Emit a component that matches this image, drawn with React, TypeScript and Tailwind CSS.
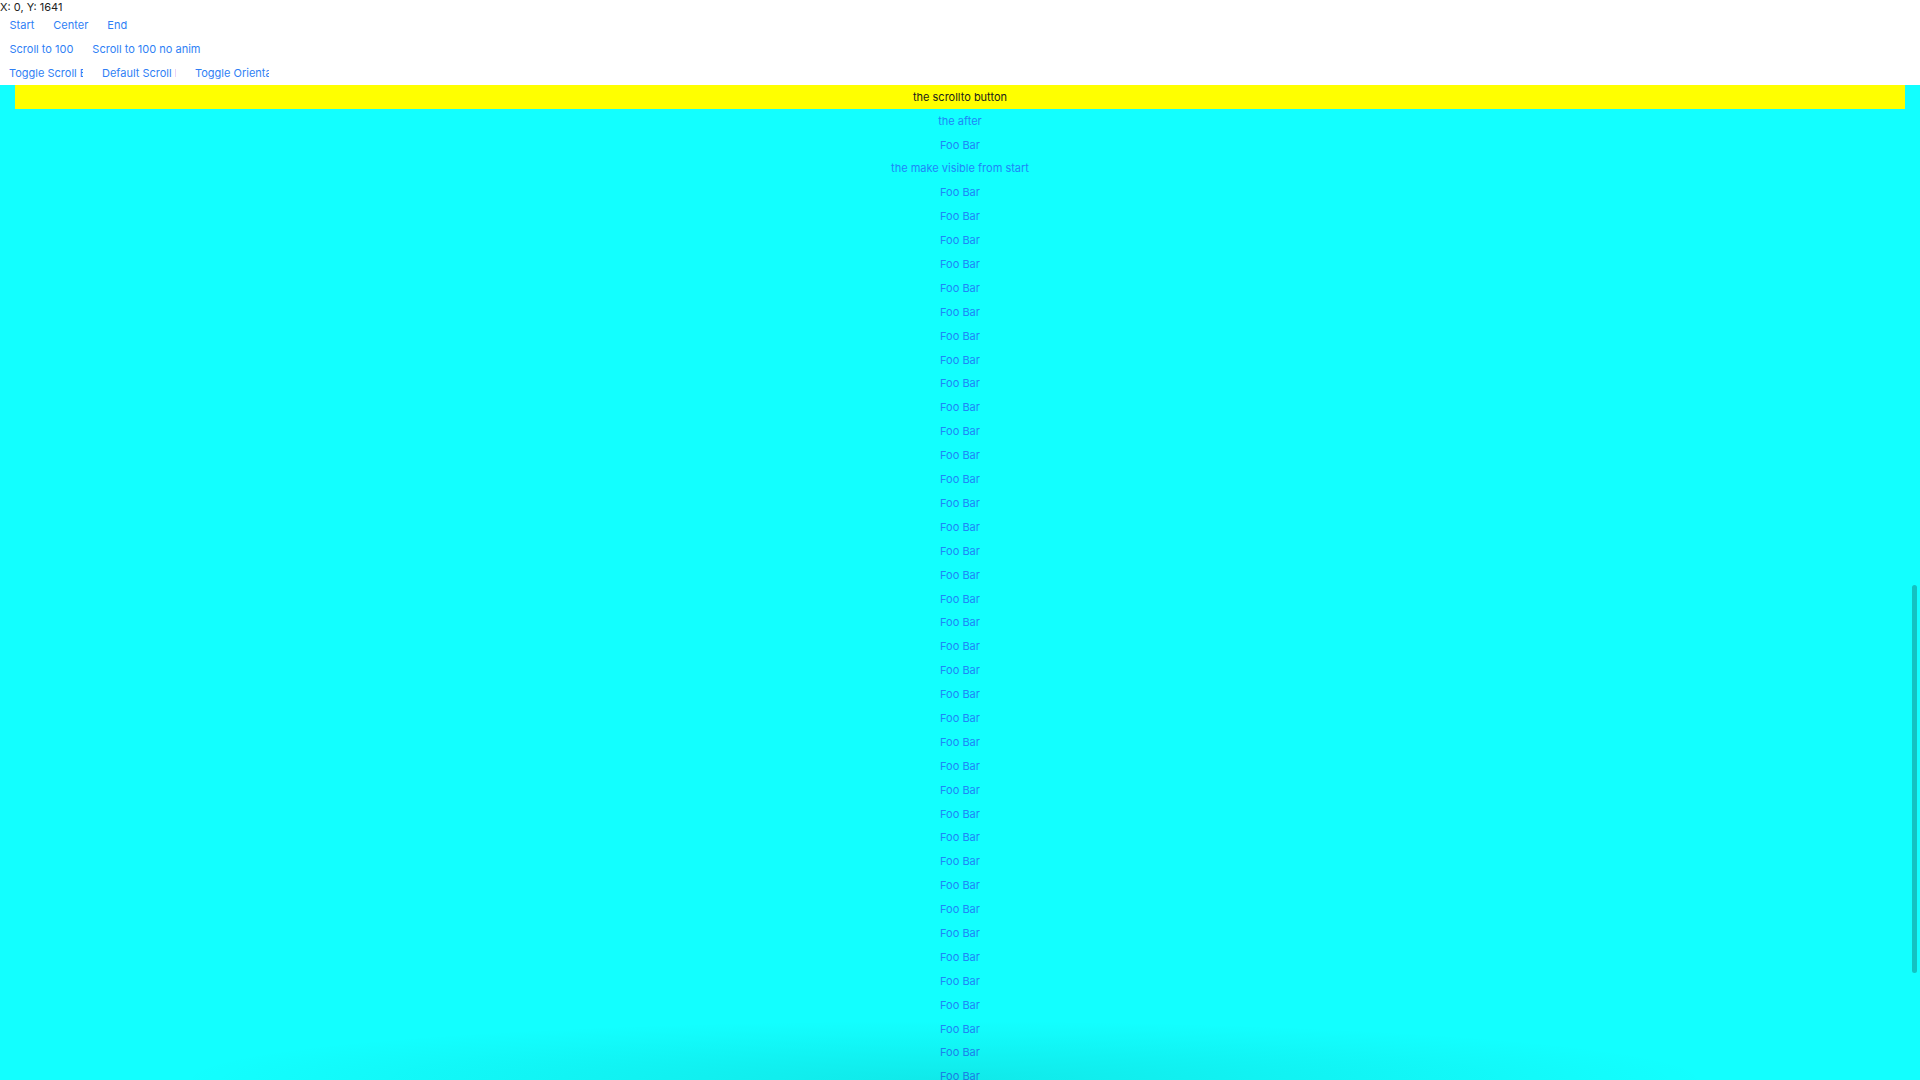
import React from 'react';

const font = { fontFamily: 'Inter, "Noto Sans", sans-serif' };

const Btn: React.FC<{ label: string; clip?: boolean }> = ({ label, clip }) =>
  clip ? (
    <button className="w-[93px] h-6 pl-[9px] pr-[10px] text-left text-[11px] text-[#2f7ff5]">
      <span className="block w-[74px] overflow-hidden whitespace-nowrap">{label}</span>
    </button>
  ) : (
    <button className="h-6 px-[9.5px] whitespace-nowrap text-[11px] text-[#2f7ff5]">{label}</button>
  );

export default function App() {
  const items: string[] = ['the after', 'Foo Bar', 'the make visible from start'];
  for (let i = 0; i < 44; i++) items.push('Foo Bar');

  return (
    <div className="relative h-screen w-full overflow-hidden bg-white flex flex-col" style={font}>
      <div className="h-[13px] pt-[1px] text-[11px] leading-[12px] text-[#222]">X: 0, Y: 1641</div>
      <div className="flex h-6 items-center">
        <Btn label="Start" />
        <Btn label="Center" />
        <Btn label="End" />
      </div>
      <div className="flex h-6 items-center">
        <Btn label="Scroll to 100" />
        <Btn label="Scroll to 100 no anim" />
      </div>
      <div className="flex h-6 items-center">
        <Btn label="Toggle Scroll Enabled" clip />
        <Btn label="Default Scroll Position" clip />
        <Btn label="Toggle Orientation" clip />
      </div>

      <div className="relative flex-1 overflow-hidden bg-[#12ffff]">
        <div className="flex flex-col">
          <div className="mx-[15px] h-6 flex items-center justify-center bg-[#ffff00] text-[11px] text-[#1c1c1c]">
            the scrollto button
          </div>
          {items.map((t, i) => (
            <div key={i} className="h-[23.9px] flex items-center justify-center text-[11px] text-[#1f86f7]">
              {t}
            </div>
          ))}
        </div>

        {/* scroll indicator */}
        <div className="absolute right-[3px] top-[500px] h-[388px] w-[5px] rounded-full bg-[#13c2c2]" />

        <div className="pointer-events-none absolute bottom-0 left-[170px] right-[200px] h-[60px] bg-[radial-gradient(ellipse_at_bottom,rgba(0,40,40,0.1),transparent_70%)]" />
      </div>
    </div>
  );
}
